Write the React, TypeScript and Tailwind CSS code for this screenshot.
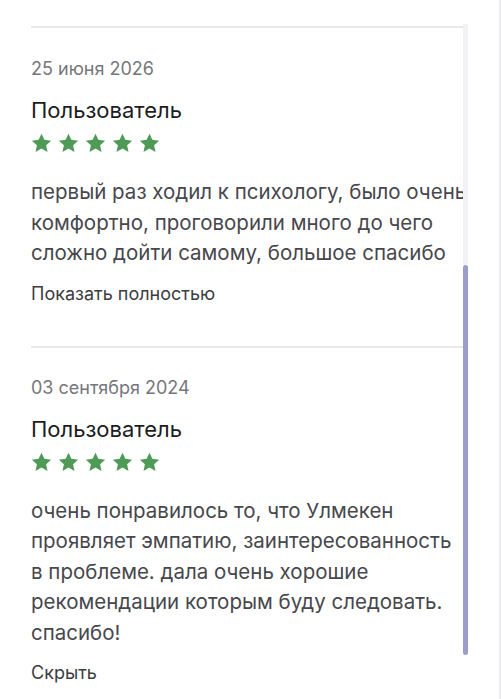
import React from "react";

const Star = () => (
  <svg width="21" height="20" viewBox="0 0 24 23" className="block">
    <path
      d="M12 0.8l3.3 7.1 7.8 0.9-5.8 5.3 1.6 7.7L12 17.9l-6.9 3.9 1.6-7.7L0.9 8.8l7.8-0.9z"
      fill="#4f9a56"
    />
  </svg>
);

const Stars = () => (
  <div className="flex gap-[6px]">
    {[0, 1, 2, 3, 4].map((i) => (
      <Star key={i} />
    ))}
  </div>
);

type R = { date: string; text: string[]; link: string };

const Review = ({ r, first }: { r: R; first?: boolean }) => (
  <div className={`border-t-[2px] border-[#e9e9ee] ${first ? "pt-[29px]" : "pt-[28px]"} pb-[39px]`}>
    <div className="text-[18px] leading-[24px] text-[#76767c]">{r.date}</div>
    <div className="mt-[14px] text-[22px] leading-[30px] text-[#1c1c20]">Пользователь</div>
    <div className="mt-[8px]">
      <Stars />
    </div>
    <div className="mt-[24px] text-[20.5px] leading-[30.5px] text-[#47474c] whitespace-nowrap">
      {r.text.map((t, i) => (
        <div key={i}>{t}</div>
      ))}
    </div>
    <div className="mt-[12px] text-[18px] leading-[26px] text-[#3c3c41]">{r.link}</div>
  </div>
);

export default function App() {
  const reviews: R[] = [
    {
      date: "25 июня 2026",
      text: [
        "первый раз ходил к психологу, было очень",
        "комфортно, проговорили много до чего",
        "сложно дойти самому, большое спасибо",
      ],
      link: "Показать полностью",
    },
    {
      date: "03 сентября 2024",
      text: [
        "очень понравилось то, что Улмекен",
        "проявляет эмпатию, заинтересованность",
        "в проблеме. дала очень хорошие",
        "рекомендации которым буду следовать.",
        "спасибо!",
      ],
      link: "Скрыть",
    },
  ];
  return (
    <div
      className="w-[501px] h-[699px] bg-white flex overflow-hidden"
      style={{ fontFamily: "Inter, 'Noto Sans', sans-serif" }}
    >
      <div className="ml-[31px] w-[432px] pt-[26px] overflow-hidden">
        {reviews.map((r, i) => (
          <Review key={i} r={r} first={i === 0} />
        ))}
      </div>
      <div className="w-[5px] pt-[24px] flex flex-col">
        <div className="h-[241px] bg-[#f1f1f6]" />
        <div className="h-[390px] bg-[#9b9dcc] rounded-full" />
      </div>
      <div className="flex-1" />
      <div className="w-[2px] bg-[#ececef]" />
    </div>
  );
}
